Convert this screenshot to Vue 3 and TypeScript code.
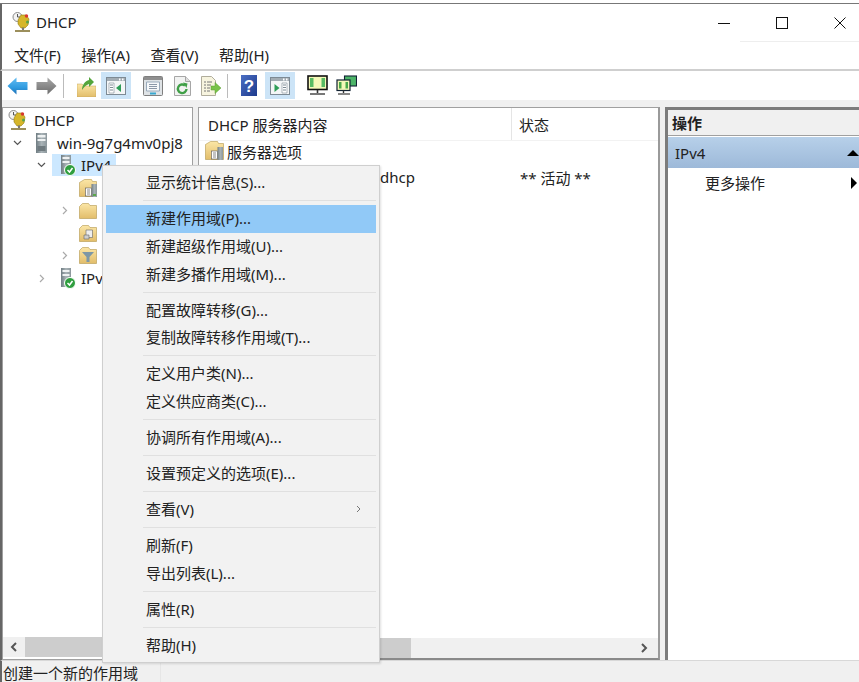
<script setup lang="ts">
type MenuEntry = { label?: string; active?: boolean; arrow?: boolean; sep?: boolean };
const menu: MenuEntry[] = [
  { label: '显示统计信息(S)...' },
  { sep: true },
  { label: '新建作用域(P)...', active: true },
  { label: '新建超级作用域(U)...' },
  { label: '新建多播作用域(M)...' },
  { sep: true },
  { label: '配置故障转移(G)...' },
  { label: '复制故障转移作用域(T)...' },
  { sep: true },
  { label: '定义用户类(N)...' },
  { label: '定义供应商类(C)...' },
  { sep: true },
  { label: '协调所有作用域(A)...' },
  { sep: true },
  { label: '设置预定义的选项(E)...' },
  { sep: true },
  { label: '查看(V)', arrow: true },
  { sep: true },
  { label: '刷新(F)' },
  { label: '导出列表(L)...' },
  { sep: true },
  { label: '属性(R)' },
  { sep: true },
  { label: '帮助(H)' },
];
</script>

<template>
  <div class="win">
    <svg width="0" height="0" class="defs">
      <defs>
        <linearGradient id="gBlue" x1="0" y1="0" x2="0" y2="1"><stop offset="0" stop-color="#63bdf2"/><stop offset=".6" stop-color="#2f9be0"/><stop offset="1" stop-color="#1f6fb4"/></linearGradient>
        <linearGradient id="gGrey" x1="0" y1="0" x2="0" y2="1"><stop offset="0" stop-color="#a8a8a8"/><stop offset="1" stop-color="#6c6c6c"/></linearGradient>
        <linearGradient id="gFold" x1="0" y1="0" x2="0" y2="1"><stop offset="0" stop-color="#fbe6a6"/><stop offset="1" stop-color="#e2bd6a"/></linearGradient>
        <linearGradient id="gSrv" x1="0" y1="0" x2="1" y2="0"><stop offset="0" stop-color="#6f7c82"/><stop offset=".5" stop-color="#a9b3b7"/><stop offset="1" stop-color="#8c979c"/></linearGradient>
        <linearGradient id="gHelp" x1="0" y1="0" x2="1" y2="1"><stop offset="0" stop-color="#4b6fc4"/><stop offset="1" stop-color="#1d3a8c"/></linearGradient>
      </defs>
    </svg>
    <div class="outer-top"></div>
    <header class="title">
      <svg class="app-ico" width="19" height="21" viewBox="0 0 19 21">
        <circle cx="5.500" cy="5" r="4.500" fill="#f3f3f3" stroke="#8a8a8a"/>
        <path d="M5.500 2V5H8.500" fill="none" stroke="#555"/>
        <path d="M6 8l3-5h5l3 4-1 6-3 3H9L6 12z" fill="#d6b62a" stroke="#937c12" stroke-width=".6"/>
        <circle cx="14.500" cy="4" r="1.700" fill="#d8382e"/>
        <circle cx="15.500" cy="10" r="1.500" fill="#55a34c"/>
        <path d="M10 15.500h2V18h-2z" fill="#7a7a7a"/>
        <path d="M3 18h15v2H3z" fill="#9c8f5c"/>
      </svg>
      <span class="title-text">DHCP</span>
      <div class="controls">
        <svg width="14" height="14" viewBox="0 0 14 14"><path d="M1 7.500h12" stroke="#111"/></svg>
        <svg width="14" height="14" viewBox="0 0 14 14"><rect x="1.500" y="1.500" width="11" height="11" fill="none" stroke="#111"/></svg>
        <svg width="14" height="14" viewBox="0 0 14 14"><path d="M1.500 1.500l11 11M12.500 1.500l-11 11" stroke="#111"/></svg>
      </div>
    </header>
    <nav class="menubar">
      <span>文件(F)</span><span>操作(A)</span><span>查看(V)</span><span>帮助(H)</span>
    </nav>
    <div class="toolbar">
      <svg class="t m5" width="21" height="18" viewBox="0 0 21 18"><path d="M.5 9L9.500.5V5H20.500v8H9.500v4.500z" fill="url(#gBlue)"/></svg>
      <svg class="t m8" width="21" height="18" viewBox="0 0 21 18"><path d="M20.500 9L11.500.5V5H.5v8h11v4.500z" fill="url(#gGrey)"/></svg>
      <i class="tsep m6"></i>
      <svg class="t m13" width="19" height="22" viewBox="0 0 19 22"><path d="M0 9h5l2 2h12v11H0z" fill="url(#gFold)" stroke="#c2a258" stroke-width=".5"/><path d="M5 15c0-5 3-9 7-10V2l5 5-5 5V9c-3 1-5 3-7 6z" fill="#54a53c"/></svg>
      <span class="tog m5"><svg width="20" height="18" viewBox="0 0 20 18"><rect x=".5" y=".5" width="19" height="17" fill="#f4f6f7" stroke="#7d8a94"/><path d="M1 1h18v3H1z" fill="#a3adb4"/><path d="M13 1.500h1.500v2H13zM16 1.500h1.500v2H16z" fill="#fff"/><path d="M3 6h5v10H3z" fill="#fff" stroke="#7d8a94" stroke-width=".6"/><path d="M4 8h3M4 10.500h3M4 13h3" stroke="#7d8a94"/><path d="M15 7v8l-5-4z" fill="#2f9e58"/></svg></span>
      <svg class="t m12" width="20" height="20" viewBox="0 0 20 20"><rect x=".5" y=".5" width="19" height="19" rx="1" fill="#dfe3e6" stroke="#7f7f7f"/><path d="M1 1h18v3H1z" fill="#8f8f8f"/><path d="M3.500 6h13v9h-13z" fill="#f6f8fa" stroke="#9ab"/><path d="M6 8.500h8M6 10.500h8M6 12.500h8" stroke="#8b98a8"/><path d="M7 17.500h6" stroke="#36a7cf" stroke-width="2"/></svg>
      <svg class="t m11" width="17" height="20" viewBox="0 0 17 20"><path d="M.5.500h11l5 5v14H.5z" fill="#f1f2f1" stroke="#a6a6a6"/><path d="M11.500.500v5h5" fill="#ddd" stroke="#a6a6a6"/><path d="M12.500 13a4.300 4.300 0 1 1-1.500-3.500" fill="none" stroke="#3f9f46" stroke-width="2.400"/><path d="M9 6.500l4.500 1-1 4.500z" fill="#3f9f46"/></svg>
      <svg class="t m10" width="20" height="20" viewBox="0 0 20 20"><path d="M.5.500h10l4 4v15H.5z" fill="#f7f4df" stroke="#b0ad9c"/><path d="M3 6h2M6 6h5M3 9h2M6 9h4M3 12h2M6 12h3M3 15h2M6 15h3" stroke="#777"/><path d="M10 10h4V6.500l6 5.500-6 5.500V14h-4z" fill="#79c349" stroke="#5c9c33" stroke-width=".5"/></svg>
      <i class="tsep m6"></i>
      <svg class="t m13" width="16" height="21" viewBox="0 0 16 21"><rect width="16" height="21" fill="url(#gHelp)"/><text x="8" y="16.500" class="q">?</text></svg>
      <span class="tog m8"><svg width="20" height="18" viewBox="0 0 20 18"><rect x=".5" y=".5" width="19" height="17" fill="#f4f6f7" stroke="#7d8a94"/><path d="M1 1h18v3H1z" fill="#a3adb4"/><path d="M13 1.500h1.500v2H13zM16 1.500h1.500v2H16z" fill="#fff"/><path d="M12 6h5v10h-5z" fill="#fff" stroke="#7d8a94" stroke-width=".6"/><path d="M13 8h3M13 10.500h3M13 13h3" stroke="#7d8a94"/><path d="M4.500 7v8l5-4z" fill="#2f9e58"/></svg></span>
      <svg class="t m12" width="21" height="21" viewBox="0 0 21 21"><rect x="1" y="1" width="19" height="13.500" fill="#f4f8b8" stroke="#111" stroke-width="1.600"/><path d="M3 3h3.500v9H3zM14.500 3H18v9h-3.500z" fill="#58bb63"/><path d="M10.500 15v3" stroke="#333" stroke-width="1.600"/><path d="M3 19h15" stroke="#555" stroke-width="1.600"/></svg>
      <svg class="t m8" width="21" height="21" viewBox="0 0 21 21"><rect x="8.500" y="1" width="12" height="10" fill="#4cb468" stroke="#123" stroke-width="1.100"/><rect x="1" y="5" width="13" height="10.500" fill="#f4f8b8" stroke="#123" stroke-width="1.200"/><path d="M3 7h2.500v6.500H3zM9.500 7H12v6.500H9.500z" fill="#4aa84a"/><path d="M7.500 15.500V18" stroke="#333" stroke-width="1.400"/><path d="M2 19h12" stroke="#555" stroke-width="1.400"/></svg>
    </div>

    <main class="panes">
      <section class="pane tree">
        <div class="scroll-area">
          <div class="row">
            <svg class="ico root-ico" width="19" height="21" viewBox="0 0 19 21">
              <circle cx="5.500" cy="5" r="4.500" fill="#f3f3f3" stroke="#8a8a8a"/>
              <path d="M5.500 2V5H8.500" fill="none" stroke="#555"/>
              <path d="M6 8l3-5h5l3 4-1 6-3 3H9L6 12z" fill="#d6b62a" stroke="#937c12" stroke-width=".6"/>
              <circle cx="14.500" cy="4" r="1.700" fill="#d8382e"/>
              <circle cx="15.500" cy="10" r="1.500" fill="#55a34c"/>
              <path d="M10 15.500h2V18h-2z" fill="#7a7a7a"/>
              <path d="M3 18h15v2H3z" fill="#9c8f5c"/>
            </svg>
            <span class="label dhcp-label">DHCP</span>
          </div>
          <div class="row">
            <svg class="chev down lv1" width="9" height="6" viewBox="0 0 9 6"><path d="M1 1l3.500 3.500L8 1" fill="none" stroke="#555" stroke-width="1.200"/></svg>
            <svg class="srv lv1s" width="11" height="20" viewBox="0 0 11 20"><path d="M0 0h11v20H0z" fill="url(#gSrv)"/><path d="M1.500 2h8v2.500h-8zM1.500 6h8v2h-8z" fill="#eef1f2"/><path d="M1.500 13h8v5h-8z" fill="#6f7a7f"/></svg>
            <span class="label win-label">win-9g7g4mv0pj8</span>
          </div>
          <div class="row">
            <svg class="chev down lv2" width="9" height="6" viewBox="0 0 9 6"><path d="M1 1l3.500 3.500L8 1" fill="none" stroke="#555" stroke-width="1.200"/></svg>
            <div class="sel">
              <svg width="16" height="21" viewBox="0 0 16 21"><path d="M1 0h10v19H1z" fill="url(#gSrv)"/><path d="M2.500 2h7v2h-7zM2.500 6h7v2h-7z" fill="#eef1f2"/><circle cx="10" cy="15" r="5.500" fill="#2f9e3f" stroke="#fff"/><path d="M7.500 15l2 2 3-4" fill="none" stroke="#fff" stroke-width="1.500"/></svg>
              <span class="ipv">IPv4</span>
            </div>
          </div>
          <div class="row child">
            <svg width="19" height="19" viewBox="0 0 19 19"><path d="M.5 3.500l5-3h7l1 2h4v15H.5z" fill="url(#gFold)" stroke="#b3974d" stroke-width=".6"/><rect x="6.500" y="9" width="6" height="8" fill="#fff" stroke="#555" stroke-width=".6"/><path d="M8 11h3M8 13h3M8 15h3" stroke="#555" stroke-width=".7"/><rect x="12.500" y="5" width="5.500" height="13" fill="url(#gSrv)"/><path d="M14 15h3v2h-3z" fill="#5aa84a"/></svg>
          </div>
          <div class="row child">
            <svg class="chev right lv3" width="6" height="9" viewBox="0 0 6 9"><path d="M1 1l3.500 3.500L1 8" fill="none" stroke="#aaa" stroke-width="1.200"/></svg>
            <svg width="18" height="16" viewBox="0 0 18 16"><path d="M.5 3.500l3-3h6l1.500 2h6.500v13H.5z" fill="url(#gFold)" stroke="#b3974d" stroke-width=".6"/></svg>
          </div>
          <div class="row child">
            <svg width="18" height="17" viewBox="0 0 18 17"><path d="M.5 3.500l3-3h6l1.500 2h6.500v14H.5z" fill="url(#gFold)" stroke="#b3974d" stroke-width=".6"/><path d="M7 5h6.500v7.500H7z" fill="#eee" stroke="#666" stroke-width=".6"/><path d="M5 10h5v4H5z" fill="#cfcfcf" stroke="#666" stroke-width=".6"/></svg>
          </div>
          <div class="row child">
            <svg class="chev right lv3" width="6" height="9" viewBox="0 0 6 9"><path d="M1 1l3.500 3.500L1 8" fill="none" stroke="#aaa" stroke-width="1.200"/></svg>
            <svg width="18" height="17" viewBox="0 0 18 17"><path d="M.5 3.500l3-3h6l1.500 2h6.500v14H.5z" fill="url(#gFold)" stroke="#b3974d" stroke-width=".6"/><path d="M3 5h12l-4.500 5v5h-3v-5z" fill="#7d97a6"/></svg>
          </div>
          <div class="row">
            <svg class="chev right lv2r" width="6" height="9" viewBox="0 0 6 9"><path d="M1 1l3.500 3.500L1 8" fill="none" stroke="#aaa" stroke-width="1.200"/></svg>
            <div class="nosel">
              <svg width="16" height="21" viewBox="0 0 16 21"><path d="M1 0h10v19H1z" fill="url(#gSrv)"/><path d="M2.500 2h7v2h-7zM2.500 6h7v2h-7z" fill="#eef1f2"/><circle cx="10" cy="15" r="5.500" fill="#2f9e3f" stroke="#fff"/><path d="M7.500 15l2 2 3-4" fill="none" stroke="#fff" stroke-width="1.500"/></svg>
              <span class="ipv">IPv6</span>
            </div>
          </div>
        </div>
        <div class="hbar">
          <svg class="arrow" width="22" height="10" viewBox="0 0 22 10"><path d="M13 1L9 5l4 4" fill="none" stroke="#555" stroke-width="2"/></svg>
          <span class="thumb tree-thumb"></span>
        </div>
      </section>

      <section class="pane center">
        <div class="scroll-area">
          <div class="list-head">
            <span class="col-name">DHCP 服务器内容</span>
            <span class="col-state">状态</span>
          </div>
          <div class="list-row opts">
            <svg width="19" height="20" viewBox="0 0 19 20"><path d="M.5 3.500l5-3h7l1 2h5v16H.5z" fill="url(#gFold)" stroke="#b3974d" stroke-width=".6"/><rect x="6.500" y="10" width="6" height="8" fill="#fff" stroke="#555" stroke-width=".6"/><path d="M8 12h3M8 14h3M8 16h3" stroke="#555" stroke-width=".7"/><rect x="12.500" y="6" width="5.500" height="13" fill="url(#gSrv)"/></svg>
            <span>服务器选项</span>
          </div>
          <div class="list-row scope">
            <span class="scope-name">dhcp</span>
            <span class="scope-state">** 活动 **</span>
          </div>
        </div>
        <div class="hbar center-bar">
          <span class="thumb center-thumb"></span>
          <svg class="arrow end" width="22" height="10" viewBox="0 0 22 10"><path d="M9 1l4 4-4 4" fill="none" stroke="#555" stroke-width="2"/></svg>
        </div>
      </section>

      <aside class="pane actions">
        <div class="act-head">操作</div>
        <div class="act-sel"><span>IPv4</span><i class="tri-up"></i></div>
        <div class="act-more"><span>更多操作</span><i class="tri-right"></i></div>
      </aside>
    </main>

    <footer class="status">
      <span class="status-text">创建一个新的作用域</span>
      <i class="status-sep"></i>
    </footer>

    <div class="ctx">
      <template v-for="(m, i) in menu" :key="i">
        <div v-if="m.sep" class="ctx-sep"></div>
        <div v-else class="ctx-item" :class="{ active: m.active }">
          <span>{{ m.label }}</span>
          <svg v-if="m.arrow" class="sub" width="5" height="8" viewBox="0 0 5 8"><path d="M1 1l3 3-3 3" fill="none" stroke="#777"/></svg>
        </div>
      </template>
    </div>
  </div>
</template>

<style>
html, body { margin: 0; padding: 0; background: #fff; }
</style>

<style scoped>
.win {
  position: relative;
  width: 859px;
  height: 682px;
  overflow: hidden;
  display: flex;
  flex-direction: column;
  background: #fff;
  font-family: "Noto Sans", "Noto Sans CJK SC", sans-serif;
  font-size: 15px;
  color: #222;
}
.defs { position: absolute; }
.outer-top { height: 4px; flex: none; box-sizing: border-box; background: #fff; border-bottom: 1px solid #777; }
.title {
  height: 37px;
  flex: none;
  display: flex;
  align-items: center;
  padding: 0 0 1px 10px;
  border-left: 2px solid #666;
  box-sizing: border-box;
}
.app-ico { flex: none; }
.title-text { margin-left: 5px; color: #222; }
.controls { margin-left: auto; display: flex; gap: 44px; padding: 1px 12px 0 0; align-items: center; }
.menubar {
  height: 30px;
  flex: none;
  box-sizing: border-box;
  display: flex;
  align-items: center;
  gap: 20.5px;
  padding: 0 0 2px 12px;
  border-left: 2px solid #666;
  border-bottom: 2px solid #cfcfcf;
  position: relative;
}
.menubar::after {
  content: "";
  position: absolute;
  left: 738px;
  right: 0;
  top: 0;
  height: 1px;
  background: #eee;
}
.toolbar {
  height: 29px;
  flex: none;
  box-sizing: border-box;
  display: flex;
  align-items: center;
  border-left: 2px solid #666;
}
.t { flex: none; }
.m5 { margin-left: 5px; }
.m6 { margin-left: 6px; }
.m8 { margin-left: 8px; }
.m10 { margin-left: 10px; }
.m11 { margin-left: 11px; }
.m12 { margin-left: 12px; }
.m13 { margin-left: 13px; }
.q { font: 700 17px "Liberation Sans", sans-serif; fill: #fff; text-anchor: middle; }
.tsep { width: 1px; height: 24px; background: #bbb; flex: none; }
.tog {
  width: 30px;
  height: 27px;
  flex: none;
  background: #cce4f7;
  display: flex;
  align-items: center;
  justify-content: center;
}
.panes {
  flex: 1;
  min-height: 0;
  display: flex;
  gap: 5px;
  padding: 7px 0 0 2px;
  background: #f0f0f0;
  border-left: 2px solid #666;
  box-sizing: border-box;
}
.pane {
  display: flex;
  flex-direction: column;
  background: #fff;
  border: 1px solid #a0a0a0;
  box-sizing: border-box;
  min-height: 0;
}
.tree { width: 191px; margin-left: -2px; }
.center { width: 462px; border-bottom: 2px solid #8a8a8a; border-right: 2px solid #9a9a9a; }
.actions { flex: 1; border: 0; border-left: 3px solid #7c7c7c; border-top: 3px solid #7c7c7c; }
.scroll-area { flex: 1; min-height: 0; }
.tree .scroll-area { padding-top: 1px; }
.row { height: 22.6px; display: flex; align-items: center; position: relative; }
.root-ico { margin-left: 5px; flex: none; }
.dhcp-label { margin-left: 7px; }
.lv1 { margin-left: 10px; flex: none; }
.lv1s { margin-left: 14px; flex: none; }
.win-label { margin-left: 10px; white-space: nowrap; }
.lv2 { margin-left: 34px; flex: none; }
.lv2r { margin-left: 36px; flex: none; }
.sel, .nosel { display: flex; align-items: center; gap: 5px; height: 22px; padding: 0 5px 0 8px; flex: none; }
.sel { margin-left: 6px; background: #cce8ff; }
.nosel { margin-left: 7px; }
.child { padding-left: 76px; }
.lv3 { position: absolute; left: 59px; }
.hbar {
  height: 20px;
  flex: none;
  display: flex;
  align-items: center;
  background: #f0f0f0;
  margin-bottom: 2px;
}
.arrow { flex: none; }
.arrow.end { margin-left: auto; margin-right: 3px; }
.thumb { height: 100%; background: #cdcdcd; display: block; }
.tree-thumb { flex: 1; }
.center-bar { margin-bottom: 0; }
.center-thumb { width: 212px; }
.list-head {
  height: 33px;
  display: flex;
  align-items: center;
  box-sizing: border-box;
  border-bottom: 1px solid #f2f2f2;
}
.col-name { width: 313px; padding-left: 9px; box-sizing: border-box; border-right: 1px solid #e5e5e5; height: 100%; display: flex; align-items: center; }
.col-state { padding-left: 7px; }
.list-row { height: 26px; display: flex; align-items: center; }
.opts { height: 24px; margin-top: -2px; padding-left: 6px; gap: 3px; }
.scope { margin-top: 1px; }
.scope-name { width: 321px; padding-left: 181px; box-sizing: border-box; }
.actions .act-head {
  height: 26px;
  flex: none;
  background: #f0f0f0;
  font-weight: 700;
  display: flex;
  align-items: center;
  padding-left: 4px;
  border-bottom: 1px solid #a0a0a0;
  box-sizing: border-box;
}
.act-sel {
  height: 31px;
  margin-top: 1px;
  flex: none;
  display: flex;
  align-items: center;
  justify-content: space-between;
  padding: 0 0 0 7px;
  background: linear-gradient(#b7d0e9, #9db9d9);
}
.tri-up { width: 0; height: 0; border: 6px solid transparent; border-top: 0; border-bottom: 6px solid #000; }
.act-more {
  height: 29px;
  flex: none;
  display: flex;
  align-items: center;
  justify-content: space-between;
  padding-left: 37px;
}
.tri-right { width: 0; height: 0; border: 6px solid transparent; border-right: 0; border-left: 6px solid #000; margin-right: 2px; }
.status {
  height: 22px;
  flex: none;
  background: #f0f0f0;
  border-top: 1px solid #d8d8d8;
  border-left: 2px solid #666;
  box-sizing: border-box;
  display: flex;
  align-items: flex-end;
  padding: 0 0 1px 1px;
  position: relative;
}
.status-text { line-height: 15px; }
.status-sep { position: absolute; left: 158px; top: 0; bottom: 0; width: 1px; background: #e6e6e6; }
.ctx {
  position: absolute;
  left: 102px;
  top: 165px;
  width: 278px;
  height: 498px;
  box-sizing: border-box;
  padding: 3px 3px;
  background: #f2f2f2;
  border: 1px solid #cfcfcf;
  box-shadow: 1px 1px 2px rgba(0, 0, 0, .12);
}
.ctx-item {
  height: 27.6px;
  display: flex;
  align-items: center;
  justify-content: space-between;
  box-sizing: border-box;
  padding: 0 15px 2px 40px;
  color: #222;
}
.ctx-item.active { background: #91c9f7; }
.ctx-sep { height: 1px; margin: 3.75px 0 3.75px 37px; background: #e0e0e0; }
.sub { flex: none; }
</style>
